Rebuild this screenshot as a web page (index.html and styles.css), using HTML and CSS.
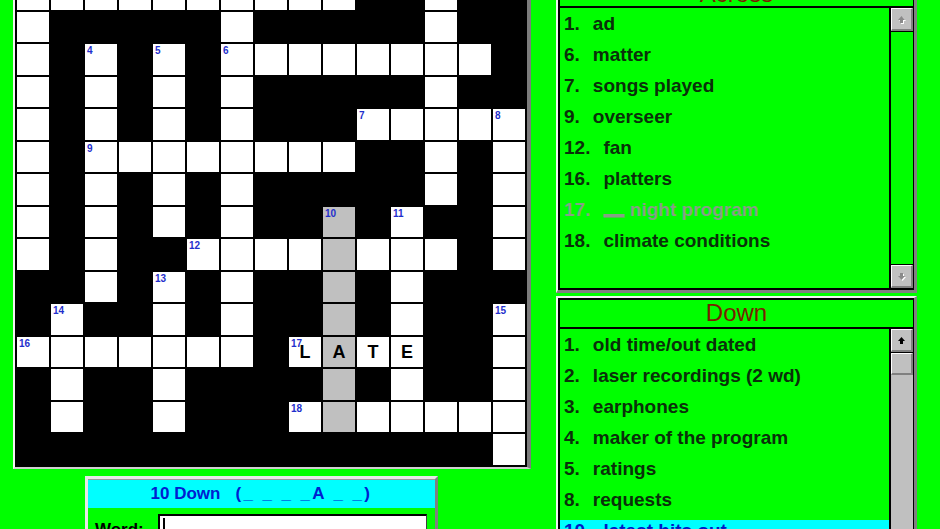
FILE: index.html
```html
<!DOCTYPE html>
<html>
<head>
<meta charset="utf-8">
<link rel="stylesheet" href="styles.css">
</head>
<body>
<div class="app">
  <div class="left">
    <div class="board">
      <div class="grid">
        <span class="w"><em class="n">1</em></span><span class="w"></span><span class="w"></span><span class="w"></span><span class="w"></span><span class="w"></span><span class="w"><em class="n">2</em></span><span class="w"></span><span class="w"></span><span class="w"></span><span class="k"></span><span class="k"></span><span class="w"><em class="n">3</em></span><span class="k"></span><span class="k"></span>
        <span class="w"></span><span class="k"></span><span class="k"></span><span class="k"></span><span class="k"></span><span class="k"></span><span class="w"></span><span class="k"></span><span class="k"></span><span class="k"></span><span class="k"></span><span class="k"></span><span class="w"></span><span class="k"></span><span class="k"></span>
        <span class="w"></span><span class="k"></span><span class="w"><em class="n">4</em></span><span class="k"></span><span class="w"><em class="n">5</em></span><span class="k"></span><span class="w"><em class="n">6</em></span><span class="w"></span><span class="w"></span><span class="w"></span><span class="w"></span><span class="w"></span><span class="w"></span><span class="w"></span><span class="k"></span>
        <span class="w"></span><span class="k"></span><span class="w"></span><span class="k"></span><span class="w"></span><span class="k"></span><span class="w"></span><span class="k"></span><span class="k"></span><span class="k"></span><span class="k"></span><span class="k"></span><span class="w"></span><span class="k"></span><span class="k"></span>
        <span class="w"></span><span class="k"></span><span class="w"></span><span class="k"></span><span class="w"></span><span class="k"></span><span class="w"></span><span class="k"></span><span class="k"></span><span class="k"></span><span class="w"><em class="n">7</em></span><span class="w"></span><span class="w"></span><span class="w"></span><span class="w"><em class="n">8</em></span>
        <span class="w"></span><span class="k"></span><span class="w"><em class="n">9</em></span><span class="w"></span><span class="w"></span><span class="w"></span><span class="w"></span><span class="w"></span><span class="w"></span><span class="w"></span><span class="k"></span><span class="k"></span><span class="w"></span><span class="k"></span><span class="w"></span>
        <span class="w"></span><span class="k"></span><span class="w"></span><span class="k"></span><span class="w"></span><span class="k"></span><span class="w"></span><span class="k"></span><span class="k"></span><span class="k"></span><span class="k"></span><span class="k"></span><span class="w"></span><span class="k"></span><span class="w"></span>
        <span class="w"></span><span class="k"></span><span class="w"></span><span class="k"></span><span class="w"></span><span class="k"></span><span class="w"></span><span class="k"></span><span class="k"></span><span class="w g"><em class="n">10</em></span><span class="k"></span><span class="w"><em class="n">11</em></span><span class="k"></span><span class="k"></span><span class="w"></span>
        <span class="w"></span><span class="k"></span><span class="w"></span><span class="k"></span><span class="k"></span><span class="w"><em class="n">12</em></span><span class="w"></span><span class="w"></span><span class="w"></span><span class="w g"></span><span class="w"></span><span class="w"></span><span class="w"></span><span class="k"></span><span class="w"></span>
        <span class="k"></span><span class="k"></span><span class="w"></span><span class="k"></span><span class="w"><em class="n">13</em></span><span class="k"></span><span class="w"></span><span class="k"></span><span class="k"></span><span class="w g"></span><span class="k"></span><span class="w"></span><span class="k"></span><span class="k"></span><span class="k"></span>
        <span class="k"></span><span class="w"><em class="n">14</em></span><span class="k"></span><span class="k"></span><span class="w"></span><span class="k"></span><span class="w"></span><span class="k"></span><span class="k"></span><span class="w g"></span><span class="k"></span><span class="w"></span><span class="k"></span><span class="k"></span><span class="w"><em class="n">15</em></span>
        <span class="w"><em class="n">16</em></span><span class="w"></span><span class="w"></span><span class="w"></span><span class="w"></span><span class="w"></span><span class="w"></span><span class="k"></span><span class="w"><em class="n">17</em><b class="ch">L</b></span><span class="w g"><b class="ch">A</b></span><span class="w"><b class="ch">T</b></span><span class="w"><b class="ch">E</b></span><span class="k"></span><span class="k"></span><span class="w"></span>
        <span class="k"></span><span class="w"></span><span class="k"></span><span class="k"></span><span class="w"></span><span class="k"></span><span class="k"></span><span class="k"></span><span class="k"></span><span class="w g"></span><span class="k"></span><span class="w"></span><span class="k"></span><span class="k"></span><span class="w"></span>
        <span class="k"></span><span class="w"></span><span class="k"></span><span class="k"></span><span class="w"></span><span class="k"></span><span class="k"></span><span class="k"></span><span class="w"><em class="n">18</em></span><span class="w g"></span><span class="w"></span><span class="w"></span><span class="w"></span><span class="w"></span><span class="w"></span>
        <span class="k"></span><span class="k"></span><span class="k"></span><span class="k"></span><span class="k"></span><span class="k"></span><span class="k"></span><span class="k"></span><span class="k"></span><span class="k"></span><span class="k"></span><span class="k"></span><span class="k"></span><span class="k"></span><span class="w"></span>
      </div>
    </div>
    <div class="wordbox">
      <div class="wb-head">10 Down<span class="pat">(_ _ _ _A _ _)</span></div>
      <div class="wb-row">
        <span class="wb-label">Word:</span>
        <div class="wb-input"><span class="caret"></span></div>
      </div>
    </div>
  </div>

  <div class="right">
    <div class="panel">
      <div class="pin">
        <div class="phead phead-across">Across</div>
        <div class="pbody across">
          <div class="list">
            <div class="item"><span class="num">1.</span>ad</div>
            <div class="item"><span class="num">6.</span>matter</div>
            <div class="item"><span class="num">7.</span>songs played</div>
            <div class="item"><span class="num">9.</span>overseer</div>
            <div class="item"><span class="num">12.</span>fan</div>
            <div class="item"><span class="num">16.</span>platters</div>
            <div class="item dim"><span class="num">17.</span><span class="blank">__</span> night program</div>
            <div class="item"><span class="num">18.</span>climate conditions</div>
          </div>
          <div class="sb sb-green">
            <div class="btn btn-up"><svg class="arr" width="9" height="9" viewBox="0 0 9 9"><path d="M5.5 2 L9 6 L7 6 L7 9 L4 9 L4 6 L2 6 Z" fill="#fff"/><path d="M4.5 1 L8 5 L6 5 L6 8 L3 8 L3 5 L1 5 Z" fill="#8a8a8a"/></svg></div>
            <div class="btn btn-down"><svg class="arr" width="9" height="9" viewBox="0 0 9 9"><path d="M5.5 9 L9 5 L7 5 L7 2 L4 2 L4 5 L2 5 Z" fill="#fff"/><path d="M4.5 8 L8 4 L6 4 L6 1 L3 1 L3 4 L1 4 Z" fill="#8a8a8a"/></svg></div>
          </div>
        </div>
      </div>
    </div>
    <div class="panel">
      <div class="pin">
        <div class="phead">Down</div>
        <div class="pbody down">
          <div class="list">
            <div class="item"><span class="num">1.</span>old time/out dated</div>
            <div class="item"><span class="num">2.</span>laser recordings (2 wd)</div>
            <div class="item"><span class="num">3.</span>earphones</div>
            <div class="item"><span class="num">4.</span>maker of the program</div>
            <div class="item"><span class="num">5.</span>ratings</div>
            <div class="item"><span class="num">8.</span>requests</div>
            <div class="item sel"><span class="num">10.</span>latest hits out</div>
          </div>
          <div class="sb sb-gray">
            <div class="btn btn-up"><svg class="arr" width="9" height="9" viewBox="0 0 9 9"><path d="M4.5 1 L8 5 L6 5 L6 8 L3 8 L3 5 L1 5 Z" fill="#000"/></svg></div>
            <div class="btn thumb"></div>
          </div>
        </div>
      </div>
    </div>
  </div>
</div>
</body>
</html>
```
FILE: styles.css
```css
* { box-sizing: border-box; }
html, body { margin: 0; padding: 0; }
body {
  background: #00ff00;
  font-family: "Liberation Sans", Arial, sans-serif;
  overflow: hidden;
  width: 940px;
  height: 529px;
}
.app {
  display: flex;
  align-items: flex-start;
  gap: 25px;
  margin-top: -25px;
  padding-left: 13px;
}
.left {
  display: flex;
  flex-direction: column;
  align-items: flex-start;
}
.board {
  background: #000;
  padding: 2px;
  border-style: solid;
  border-width: 2px 4px 2px 2px;
  border-color: #e6e6e6 #7c7c7c #cfcfcf #f2f2f2;
}
.grid {
  display: grid;
  grid-template-columns: repeat(15, 32px);
  grid-template-rows: repeat(15, 30.5px);
  gap: 2px;
}
.w {
  background: #fff;
  position: relative;
  display: flex;
  align-items: center;
  justify-content: center;
}
.k { background: #000; }
.g { background: #c0c0c0; }
.n {
  position: absolute;
  top: 2px;
  left: 2px;
  font-style: normal;
  font-size: 10px;
  font-weight: bold;
  line-height: 1;
  color: #1f2fcc;
}
.ch {
  font-size: 18px;
  font-weight: bold;
  color: #000;
  line-height: 1;
}

.wordbox {
  margin: 7px 0 0 72px;
  width: 353px;
  height: 70px;
  border-style: solid;
  border-width: 3px;
  border-color: #e8e8e8 #808080 #808080 #e8e8e8;
}
.wb-head {
  height: 29px;
  background: #00ffff;
  border-top: 1px solid #9a9a9a;
  text-align: center;
  font-size: 17px;
  font-weight: bold;
  line-height: 27px;
  color: #0020d0;
  white-space: nowrap;
}
.pat {
  margin-left: 15px;
  letter-spacing: 2.4px;
}
.wb-row {
  display: flex;
  align-items: flex-start;
  padding: 6px 8px 0 7px;
  gap: 14px;
}
.wb-label {
  margin-top: 6px;
  font-size: 17px;
  font-weight: bold;
  color: #000;
  width: 49px;
}
.wb-input {
  width: 269px;
  height: 30px;
  background: #fff;
  border-style: solid;
  border-width: 2px 1px 1px 2px;
  border-color: #000 #404040 #404040 #000;
  padding: 2px 0 0 3px;
}
.caret {
  display: block;
  width: 2px;
  height: 16px;
  background: #000;
}

.right {
  display: flex;
  flex-direction: column;
  gap: 3px;
  width: 361px;
}
.panel {
  border-style: solid;
  border-width: 2px 3px 3px 2px;
  border-color: #f4f4f4 #808080 #808080 #f4f4f4;
}
.pin {
  border: 2px solid #000;
  border-right-width: 1px;
}
.phead {
  height: 29px;
  border-bottom: 2px solid #000;
  text-align: center;
  font-size: 24px;
  line-height: 26px;
  color: #7a1e00;
  overflow: hidden;
}
.phead-across { line-height: 30px; }
.pbody { display: flex; }
.pbody.across { height: 280px; }
.pbody.down { height: 230px; }
.list {
  flex: 1;
  padding: 5px 0 0 0;
}
.item {
  height: 22px;
  line-height: 22px;
  margin-bottom: 9px;
  padding-left: 4px;
  font-size: 19px;
  font-weight: bold;
  color: #0a300a;
  white-space: nowrap;
}
.num { margin-right: 13px; }
.item.dim { color: #86a086; }
.blank {
  text-decoration: underline;
  text-decoration-thickness: 3px;
  text-underline-offset: -2px;
}
.item.sel { background: #00ffff; color: #0018c8; }

.sb {
  width: 24px;
  border-left: 2px solid #000;
  display: flex;
  flex-direction: column;
}
.sb-green { background: #00ff00; justify-content: space-between; }
.sb-gray { background: #c0c0c0; }
.btn {
  height: 23px;
  background: #c0c0c0;
  border-style: solid;
  border-width: 1px 2px 2px 1px;
  border-color: #fff #808080 #808080 #fff;
  display: flex;
  align-items: center;
  justify-content: center;
}
.sb-gray .btn-up { box-shadow: 0 1px 0 #000; margin-bottom: 1px; }
.sb-green .btn-up { box-shadow: 0 1px 0 #000; }
.sb-green .btn-down { box-shadow: 0 -1px 0 #000; }
.thumb { height: 22px; }
.arr { display: block; }
```
